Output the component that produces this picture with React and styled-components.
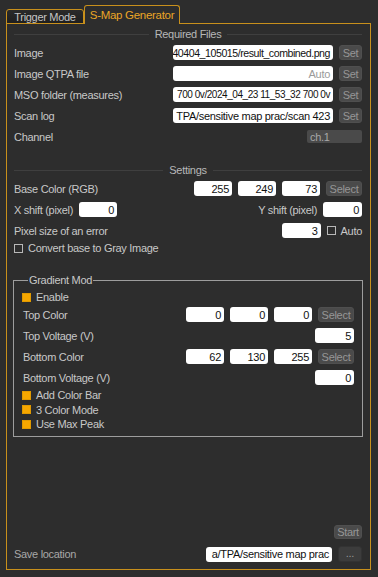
import React from "react";
import styled, { createGlobalStyle } from "styled-components";

const GlobalStyle = createGlobalStyle`
   html, body {
      margin: 0;
      background: #2d2d2d;
   }
   body {
      font-family: "Liberation Sans", Arial, sans-serif;
      font-size: 11px;
      letter-spacing: -0.3px;
      color: #c8c8c8;
   }
`;

const ORANGE = "#c8901c";

function App() {
   return (
      <>
         <GlobalStyle />
         <Window>
            <TabBar>
               <Tab>Trigger Mode</Tab>
               <Tab $active>S-Map Generator</Tab>
            </TabBar>
            <Panel>
               <SectionHeader>Required Files</SectionHeader>
               <Row>
                  <Label>Image</Label>
                  <Group>
                     <Field $w={160} $fs={10.6} $ls={-0.45}>40404_105015/result_combined.png</Field>
                     <SmallButton $w={23}>Set</SmallButton>
                  </Group>
               </Row>
               <Row>
                  <Label>Image QTPA file</Label>
                  <Group>
                     <Field $w={160} $placeholder>Auto</Field>
                     <SmallButton $w={23}>Set</SmallButton>
                  </Group>
               </Row>
               <Row>
                  <Label>MSO folder (measures)</Label>
                  <Group>
                     <Field $w={160} $fs={10} $ls={-0.45}>700 0v/2024_04_23 11_53_32 700 0v</Field>
                     <SmallButton $w={23}>Set</SmallButton>
                  </Group>
               </Row>
               <Row>
                  <Label>Scan log</Label>
                  <Group>
                     <Field $w={160}>TPA/sensitive map prac/scan 423</Field>
                     <SmallButton $w={23}>Set</SmallButton>
                  </Group>
               </Row>
               <Row>
                  <Label>Channel</Label>
                  <Combo>ch.1</Combo>
               </Row>

               <SectionHeader $top={15}>Settings</SectionHeader>
               <Row>
                  <Label>Base Color (RGB)</Label>
                  <Group>
                     <Field $w={38}>255</Field>
                     <Field $w={38}>249</Field>
                     <Field $w={38}>73</Field>
                     <SmallButton $w={36}>Select</SmallButton>
                  </Group>
               </Row>
               <Row>
                  <Group>
                     <Label>X shift (pixel)</Label>
                     <Field $w={38}>0</Field>
                  </Group>
                  <Group>
                     <Label>Y shift (pixel)</Label>
                     <Field $w={39}>0</Field>
                  </Group>
               </Row>
               <Row>
                  <Label>Pixel size of an error</Label>
                  <Group>
                     <Field $w={39}>3</Field>
                     <Check label="Auto" />
                  </Group>
               </Row>
               <Row $h={14}>
                  <Check label="Convert base to Gray Image" />
               </Row>

               <GroupBox>
                  <Legend>Gradient Mod</Legend>
                  <Row $h={14}>
                     <Check checked label="Enable" />
                  </Row>
                  <Row $inset>
                     <Label>Top Color</Label>
                     <Group>
                        <Field $w={38}>0</Field>
                        <Field $w={38}>0</Field>
                        <Field $w={38}>0</Field>
                        <SmallButton $w={36}>Select</SmallButton>
                     </Group>
                  </Row>
                  <Row $inset>
                     <Label>Top Voltage (V)</Label>
                     <Field $w={39}>5</Field>
                  </Row>
                  <Row $inset>
                     <Label>Bottom Color</Label>
                     <Group>
                        <Field $w={38}>62</Field>
                        <Field $w={38}>130</Field>
                        <Field $w={38}>255</Field>
                        <SmallButton $w={36}>Select</SmallButton>
                     </Group>
                  </Row>
                  <Row $inset>
                     <Label>Bottom Voltage (V)</Label>
                     <Field $w={39}>0</Field>
                  </Row>
                  <Row $h={14.5}>
                     <Check checked label="Add Color Bar" />
                  </Row>
                  <Row $h={14.5}>
                     <Check checked label="3 Color Mode" />
                  </Row>
                  <Row $h={14.5}>
                     <Check checked label="Use Max Peak" />
                  </Row>
               </GroupBox>

               <Footer>
                  <StartRow>
                     <SmallButton $w={28} $h={14}>Start</SmallButton>
                  </StartRow>
                  <Row $h={18}>
                     <Label $dim>Save location</Label>
                     <Group>
                        <Field $w={126}>a/TPA/sensitive map prac</Field>
                        <SmallButton $w={24} $h={16} $flat>...</SmallButton>
                     </Group>
                  </Row>
               </Footer>
            </Panel>
         </Window>
      </>
   );
}

function Check({ checked, label }) {
   return (
      <CheckWrap>
         <Box $checked={checked} />
         <span>{label}</span>
      </CheckWrap>
   );
}

const Window = styled.div`
   padding: 5px 7px 7px 6px;
`;

const TabBar = styled.div`
   display: flex;
   align-items: flex-end;
   height: 19px;
   margin-bottom: -1px;
   position: relative;
   z-index: 1;
`;

const Tab = styled.div`
   box-sizing: border-box;
   height: ${(p) => (p.$active ? 19 : 15)}px;
   width: ${(p) => (p.$active ? 96 : 78)}px;
   display: flex;
   align-items: center;
   justify-content: center;
   font-size: ${(p) => (p.$active ? 11.5 : 11)}px;
   color: ${(p) => (p.$active ? "#eaa526" : "#c4c4c4")};
   background: ${(p) => (p.$active ? "#2d2d2d" : "linear-gradient(#2a2a2a, #1f1f1f)")};
   border: 1px solid ${ORANGE};
   border-bottom: ${(p) => (p.$active ? "none" : `1px solid ${ORANGE}`)};
   border-radius: 3px 3px 0 0;
   padding-top: ${(p) => (p.$active ? 0 : 1)}px;
`;

const Panel = styled.div`
   box-sizing: border-box;
   height: 547px;
   border: 1px solid ${ORANGE};
   padding: 2px 8px 6px 7px;
   display: flex;
   flex-direction: column;
`;

const SectionHeader = styled.div`
   display: flex;
   align-items: center;
   height: 16px;
   margin-top: ${(p) => p.$top || 0}px;
   color: #b8b8b8;
   gap: 6px;
   &::before,
   &::after {
      content: "";
      flex: 1;
      height: 1px;
      background: #3f3f3f;
   }
`;

const Row = styled.div`
   display: flex;
   align-items: center;
   justify-content: space-between;
   height: ${(p) => p.$h || 21}px;
   flex-shrink: 0;
   padding-left: ${(p) => (p.$inset ? 1 : 0)}px;
`;

const Group = styled.div`
   display: flex;
   align-items: center;
   gap: 6px;
`;

const Label = styled.span`
   color: ${(p) => (p.$dim ? "#a8a8a8" : "#c8c8c8")};
   white-space: nowrap;
`;

const Field = styled.div`
   box-sizing: border-box;
   width: ${(p) => p.$w}px;
   height: 15px;
   background: #fff;
   border-radius: 3px;
   color: ${(p) => (p.$placeholder ? "#9a9a9a" : "#111")};
   font-size: ${(p) => p.$fs || 11}px;
   letter-spacing: ${(p) => (p.$ls != null ? p.$ls : -0.3)}px;
   display: flex;
   align-items: center;
   justify-content: flex-end;
   padding: 0 3px 0 2px;
   overflow: hidden;
   white-space: nowrap;
`;

const SmallButton = styled.div`
   box-sizing: border-box;
   width: ${(p) => p.$w}px;
   height: ${(p) => p.$h || 15}px;
   background: ${(p) => (p.$flat ? "#3c3c3c" : "#4a4a4a")};
   border: 1px solid ${(p) => (p.$flat ? "#333" : "#4f4f4f")};
   border-radius: 3px;
   color: #969696;
   display: flex;
   align-items: center;
   justify-content: center;
   padding-bottom: ${(p) => (p.$flat ? 3 : 0)}px;
`;

const Combo = styled.div`
   box-sizing: border-box;
   width: 55px;
   height: 13px;
   background: #4a4a4a;
   border-radius: 2px;
   color: #a8a8a8;
   display: flex;
   align-items: center;
   padding-left: 3px;
`;

const CheckWrap = styled.label`
   display: flex;
   align-items: center;
   gap: 5px;
   color: #c8c8c8;
`;

const Box = styled.span`
   box-sizing: border-box;
   width: 9px;
   height: 9px;
   border: 1px solid ${(p) => (p.$checked ? "#e19a00" : "#b8b8b8")};
   background: ${(p) => (p.$checked ? "#f6a700" : "transparent")};
`;

const GroupBox = styled.fieldset`
   margin: 18px -1px 0;
   padding: 3px 8px 4px 8px;
   border: 1px solid #9d9d9d;
   display: flex;
   flex-direction: column;
`;

const Legend = styled.legend`
   padding: 0 1px;
   margin-left: 6px;
   line-height: 14px;
   color: #c8c8c8;
`;

const Footer = styled.div`
   margin-top: auto;
   display: flex;
   flex-direction: column;
   gap: 6px;
`;

const StartRow = styled.div`
   display: flex;
   justify-content: flex-end;
`;

export default App;
